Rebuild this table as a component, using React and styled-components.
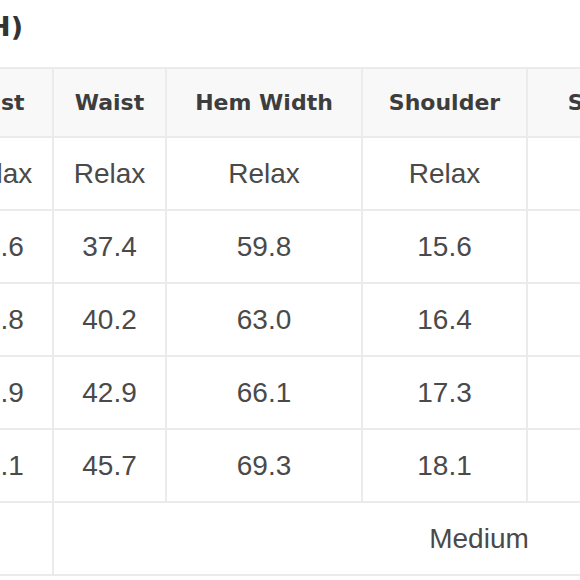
import React from "react";
import styled, { createGlobalStyle } from "styled-components";

const GlobalStyle = createGlobalStyle`
  html, body {
    margin: 0;
    padding: 0;
    background: #ffffff;
    overflow: hidden;
  }
`;

const Frame = styled.div`
  margin-left: -161px;
  width: 1200px;
`;

const TitleBar = styled.div`
  display: flex;
  justify-content: flex-end;
  width: 184px;
  margin: 11px 0 25px;
`;

const Title = styled.h2`
  margin: 0;
  white-space: nowrap;
  font-family: "DejaVu Sans", "Liberation Sans", sans-serif;
  font-weight: bold;
  font-size: 27px;
  line-height: 31px;
  color: #333333;
`;

const Table = styled.table`
  border-collapse: collapse;
  table-layout: fixed;
  width: 1065px;
`;

const HeadCell = styled.th`
  height: 67px;
  padding: 0;
  border: 2px solid #ebebeb;
  background: #f8f8f8;
  font-family: "DejaVu Sans", "Liberation Sans", sans-serif;
  font-weight: bold;
  font-size: 22px;
  color: #3d3d3d;
  text-align: center;
  white-space: nowrap;
`;

const Cell = styled.td`
  height: 71px;
  padding: 0;
  border: 2px solid #ebebeb;
  background: #ffffff;
  font-family: "Liberation Sans", Arial, sans-serif;
  font-size: 28px;
  color: #4a4a4a;
  text-align: center;
  white-space: nowrap;
`;

const columns = [
  { name: "Size", width: 100 },
  { name: "Bust", width: 113 },
  { name: "Waist", width: 113 },
  { name: "Hem Width", width: 196 },
  { name: "Shoulder", width: 165 },
  { name: "Sleeve", width: 164 },
  { name: "Length", width: 214 },
];

const rows = [
  ["", "Relax", "Relax", "Relax", "Relax", "", ""],
  ["S", "35.6", "37.4", "59.8", "15.6", "", ""],
  ["M", "37.8", "40.2", "63.0", "16.4", "", ""],
  ["L", "40.9", "42.9", "66.1", "17.3", "", ""],
  ["XL", "43.1", "45.7", "69.3", "18.1", "", ""],
];

export default function App() {
  return (
    <>
      <GlobalStyle />
      <Frame>
        <TitleBar>
          <Title>SIZE CHART (INCH)</Title>
        </TitleBar>
        <Table>
          <colgroup>
            {columns.map((c) => (
              <col key={c.name} style={{ width: c.width }} />
            ))}
          </colgroup>
          <thead>
            <tr>
              {columns.map((c) => (
                <HeadCell key={c.name}>{c.name}</HeadCell>
              ))}
            </tr>
          </thead>
          <tbody>
            {rows.map((r, i) => (
              <tr key={i}>
                {r.map((v, j) => (
                  <Cell key={j}>{v}</Cell>
                ))}
              </tr>
            ))}
            <tr>
              <Cell colSpan={2}></Cell>
              <Cell colSpan={5}>Medium</Cell>
            </tr>
          </tbody>
        </Table>
      </Frame>
    </>
  );
}
